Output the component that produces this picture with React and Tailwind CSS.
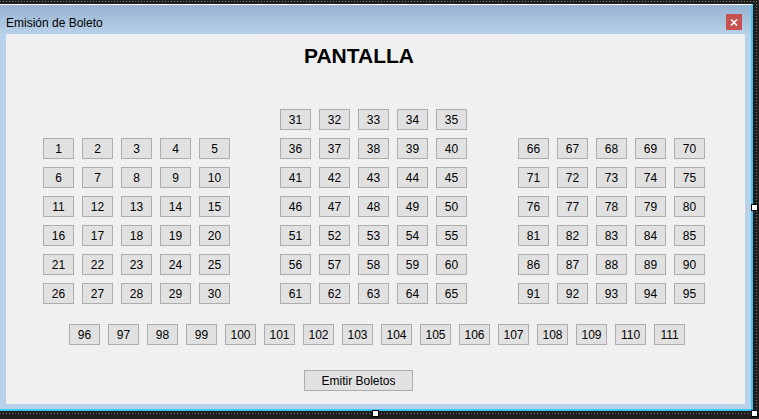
import React from "react";

const range = (a, b) => Array.from({ length: b - a + 1 }, (_, i) => a + i);

function Seat({ n }) {
    return (
        <button className="w-[31px] h-[21px] bg-[#e1e1e1] border border-[#adadad] text-[12px] leading-none text-black flex items-center justify-center">
            {n}
        </button>
    );
}

function SeatGroup({ from, to, className = "" }) {
    return (
        <div className={`grid grid-cols-5 gap-[8px] ${className}`}>
            {range(from, to).map((n) => (
                <Seat key={n} n={n} />
            ))}
        </div>
    );
}

function Handle({ className }) {
    return <div className={`absolute w-[7px] h-[7px] bg-white border border-black ${className}`} />;
}

export default function App() {
    return (
        <div
            className="relative w-[759px] h-[419px] bg-[#1e1e1e] overflow-hidden"
            style={{ fontFamily: '"Liberation Sans", Arial, sans-serif' }}
        >
            {/* designer dotted frame */}
            <div className="h-[4px] pt-[1px]">
                <div className="h-[1px] bg-[repeating-linear-gradient(90deg,#7a7a7a_0_1px,transparent_1px_3px)]" />
            </div>

            <div className="flex">
                {/* Window */}
                <div className="w-[753px] h-[407px] border-t border-t-white border-r-2 border-r-[#3cc6ef] border-b-2 border-b-[#3cc6ef] bg-[linear-gradient(to_bottom,#97b3d1_0px,#b9d1ea_30px)]">
                    {/* Title bar */}
                    <div className="h-[29px] flex justify-between items-start">
                        <span className="pl-[6px] pt-[10px] text-[12px] leading-[16px] text-black">Emisión de Boleto</span>
                        <div className="mt-[9px] mr-[9px] w-[16px] h-[16px] bg-[#c75050] flex items-center justify-center">
                            <svg width="8" height="7" viewBox="0 0 8 7" fill="none">
                                <path d="M1 0.5 L7 6.5 M7 0.5 L1 6.5" stroke="white" strokeWidth="1.6" />
                            </svg>
                        </div>
                    </div>

                    {/* Client area */}
                    <div className="ml-[6px] w-[739px] h-[370px] bg-[#f0f0f0] flex flex-col">
                        <h1 className="pl-[298px] pt-[10px] text-[21px] leading-[24px] font-bold text-black">PANTALLA</h1>

                        <div className="mt-[41px] pl-[37px] flex items-start">
                            <SeatGroup from={1} to={30} className="mt-[29px]" />
                            <SeatGroup from={31} to={65} className="ml-[50px]" />
                            <SeatGroup from={66} to={95} className="ml-[51px] mt-[29px]" />
                        </div>

                        <div className="mt-[20px] pl-[63px] flex gap-[8px]">
                            {range(96, 111).map((n) => (
                                <Seat key={n} n={n} />
                            ))}
                        </div>

                        <div className="mt-[25px] pl-[298px] flex">
                            <button className="w-[109px] h-[21px] bg-[#e1e1e1] border border-[#adadad] text-[12px] leading-none text-black flex items-center justify-center">
                                Emitir Boletos
                            </button>
                        </div>
                    </div>
                </div>

                {/* right dotted strip */}
                <div className="flex-1 flex justify-center">
                    <div className="w-[1px] h-full bg-[repeating-linear-gradient(180deg,#7a7a7a_0_1px,transparent_1px_3px)]" />
                </div>
            </div>

            <div className="h-[8px] pt-[2px]">
                <div className="h-[1px] bg-[repeating-linear-gradient(90deg,#7a7a7a_0_1px,transparent_1px_3px)]" />
            </div>

            {/* resize handles */}
            <Handle className="left-[751px] top-[204px]" />
            <Handle className="left-[372px] top-[410px]" />
            <Handle className="left-[751px] top-[410px]" />
        </div>
    );
}
